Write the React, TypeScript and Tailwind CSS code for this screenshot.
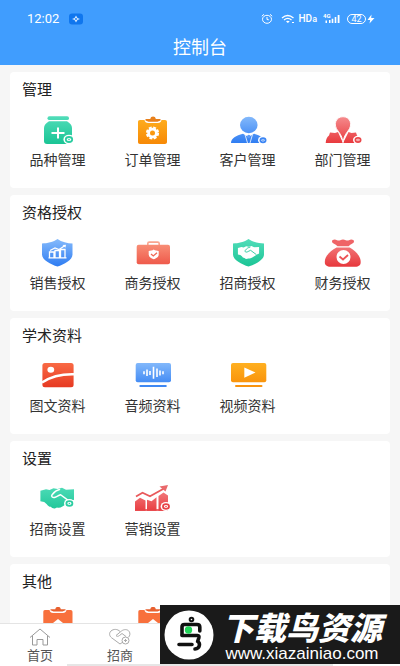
import type { ReactNode } from 'react';

type Tone = 'green' | 'orange' | 'blue' | 'red' | 'coral' | 'rust';

const tones: Record<Tone, [string, string]> = {
  green: ['#4fdcb8', '#1cc596'],
  orange: ['#ffb020', '#f78a06'],
  blue: ['#82b8fb', '#2f7df2'],
  red: ['#f58a8c', '#e83a3e'],
  coral: ['#fa9a80', '#ee5547'],
  rust: ['#f96a45', '#e5361f'],
};

function Glyph({
  id,
  tone,
  children,
}: {
  id: string;
  tone: Tone;
  children: (fill: string) => ReactNode;
}) {
  const [from, to] = tones[tone];
  return (
    <svg viewBox="0 0 40 32" className="h-8 w-10" aria-hidden="true">
      <defs>
        <linearGradient
          id={id}
          gradientUnits="userSpaceOnUse"
          x1="0"
          y1="2"
          x2="0"
          y2="28"
        >
          <stop offset="0" stopColor={from} />
          <stop offset="1" stopColor={to} />
        </linearGradient>
      </defs>
      {children(`url(#${id})`)}
    </svg>
  );
}

// small settings cog sitting on the lower right of an icon
function Cog({ x, y, fill, r = 3 }: { x: number; y: number; fill: string; r?: number }) {
  return (
    <g>
      <ellipse cx={x} cy={y} rx={r + 2.4} ry={r + 1.6} fill="#fff" />
      <ellipse cx={x} cy={y} rx={r} ry={r * 0.78} fill="none" stroke={fill} strokeWidth="1.8" />
      <circle cx={x} cy={y} r="0.8" fill={fill} />
    </g>
  );
}

function Gear({ x, y }: { x: number; y: number }) {
  return (
    <g>
      <circle cx={x} cy={y} r="3.9" fill="none" stroke="#fff" strokeWidth="2.8" />
      <circle
        cx={x}
        cy={y}
        r="5.6"
        fill="none"
        stroke="#fff"
        strokeWidth="2"
        strokeDasharray="2.9 1.5"
      />
    </g>
  );
}

function HandshakeShape({ fill, line }: { fill: string; line: string }) {
  return (
    <g>
      <path
        d="M2.4 6.8 8 5.2l3.5.8 4-1.7 4 .7 4.5-1.2 4 2 8-.6v10.6l-3.4 1.6-8.2 5.2c-2 1.2-3.6 1.6-5.4.9l-1.6.7c-1.8.6-3.3-.2-4.6-1.4-1.8-.1-3-1-4-2.6L6.2 18l-3.8-.8z"
        fill={fill}
      />
      <path
        d="M21.5 5.6c-3 .6-5 2.2-7.4 5.1-1.4 1.9.7 3.4 3 2.6 2-.7 3.4-2.1 5.5-2.6l8.6 6.4"
        fill="none"
        stroke={line}
        strokeWidth="1.5"
        strokeLinecap="round"
      />
    </g>
  );
}

const varietyIcon = (
  <Glyph id="variety" tone="green">
    {(fill) => (
      <>
        <rect x="9.5" y="1.3" width="21.5" height="3.8" rx="1.9" fill={fill} />
        <path
          d="M11 6.2h18c3 2 5 3.8 5 6.8v13c0 2-1 3-3 3H9c-2 0-3-1-3-3V13c0-3 2-4.8 5-6.8z"
          fill={fill}
        />
        <path d="M20 12.5v11M13.5 18h13" stroke="#fff" strokeWidth="2" />
        <Cog x={31} y={24.5} fill="#2ccda1" r={3.2} />
      </>
    )}
  </Glyph>
);

const orderIcon = (
  <Glyph id="order" tone="orange">
    {(fill) => (
      <>
        <path
          d="M7 5h4.5c.6 2.2 1.5 3 3.5 3h10c2 0 2.9-.8 3.5-3H32c1.4 0 2 .8 2 2v20c0 1.3-.8 2-2 2H7c-1.3 0-2-.7-2-2V7c0-1.2.7-2 2-2z"
          fill={fill}
        />
        <path d="M12.5 4h4.8c.3-3.3 5.2-3.3 5.5 0h4.7v1.5l-3 1.3h-9l-3-1.3z" fill="#e8801c" />
        <Gear x={19.5} y={18} />
      </>
    )}
  </Glyph>
);

const customerIcon = (
  <Glyph id="customer" tone="blue">
    {(fill) => (
      <>
        <ellipse cx="20.8" cy="10" rx="8.8" ry="8.2" fill={fill} />
        <path
          d="M3 28c.2-4.5 5-7.5 12-9.2L20.5 22 26 18.8C32.5 20.5 37 23.5 37.5 28z"
          fill={fill}
        />
        <path d="m17 19.5 2.5 8.5M24.5 19.5 22 28" stroke="#fff" strokeWidth=".8" />
        <circle cx="20.8" cy="21.5" r="1.7" fill="#5b9bf7" />
        <Cog x={35} y={25.3} fill="#3c86f4" r={2.6} />
      </>
    )}
  </Glyph>
);

const departmentIcon = (
  <Glyph id="department" tone="red">
    {(fill) => (
      <>
        <path
          d="M2.7 28c.2-3.5 1.3-6 3.3-7.5l1-3 5 .5 3-1L20 28l5.5-11 3 1 4.5-.5 1 3c2 1.5 3 4 3 7.5z"
          fill={fill}
        />
        <path
          d="M20 27.5c-.8-6-2.6-8.3-4.8-11.3C9.5 9.5 13 1.7 20 1.7s10.5 7.8 4.8 14.5c-2.2 3-4 5.3-4.8 11.3z"
          fill={fill}
          stroke="#fff"
          strokeWidth=".9"
        />
        <Cog x={35} y={25} fill="#ea4649" r={2.6} />
      </>
    )}
  </Glyph>
);

const salesIcon = (
  <Glyph id="sales" tone="blue">
    {(fill) => (
      <>
        <path
          d="M19.5 1c4 3 10 4.3 15 4.5v11C34.5 22 26 26.5 19.5 28.5 13 26.5 4 22 4 16.5v-11C9 5.3 15.5 4 19.5 1z"
          fill={fill}
        />
        <path
          d="M11.5 19.5V14H16v5.5M17 19.5v-7h4.5v7M22.5 19.5v-8H27v8M10.5 19.8h18"
          fill="none"
          stroke="#fff"
          strokeWidth="1.3"
        />
        <path d="m12 12.5 5-2.5 4 1.5 6-4" fill="none" stroke="#fff" strokeWidth="1.2" />
        <path d="m24.5 7 3.5-.2-.6 3z" fill="#fff" />
      </>
    )}
  </Glyph>
);

const businessIcon = (
  <Glyph id="business" tone="coral">
    {(fill) => (
      <>
        <path
          d="M14.8 7V5.5c0-1 .6-1.4 1.5-1.4h8.4c.9 0 1.5.4 1.5 1.4V7"
          fill="none"
          stroke="#f9a58f"
          strokeWidth="1.6"
        />
        <rect x="3.7" y="6.7" width="33.3" height="19.5" rx="2" fill={fill} />
        <path
          d="M20.7 11.5c1.5 1 3.2 1.4 5 1.5v3.5c0 2.5-2.6 3.9-5 4.8-2.4-.9-5-2.3-5-4.8V13c1.8-.1 3.5-.5 5-1.5z"
          fill="#fff"
        />
        <path d="m18 16 2.3 2 3.7-3.3" fill="none" stroke="#f06a57" strokeWidth="1.3" />
      </>
    )}
  </Glyph>
);

const investIcon = (
  <Glyph id="invest" tone="green">
    {(fill) => (
      <>
        <path
          d="M20.5 1c4 3 10.5 4.3 15.5 4.5v11c0 5.5-9 10-15.5 12-6.5-2-15.5-6.5-15.5-12v-11C10 5.3 16.5 4 20.5 1z"
          fill={fill}
        />
        <g transform="translate(8.4 5.6) scale(.63)">
          <HandshakeShape fill="#fff" line="#2dcb9f" />
        </g>
      </>
    )}
  </Glyph>
);

const financeIcon = (
  <Glyph id="finance" tone="red">
    {(fill) => (
      <>
        <path
          d="M9 3.5c0-1.8 2.8-2.5 5-1.3 1.2.6 2.3.5 3.3 0 1.7-1 3.7-1 5.4 0 1 .5 2.2.6 3.3 0 2.2-1.2 5-.5 5 1.3 0 2-3.5 2.6-5.3 4.7H14.5C12.6 6.1 9 5.5 9 3.5z"
          fill="#ef6467"
        />
        <path
          d="M13.5 9.5h13.2C32.5 13 37.7 18 37.7 24c0 3.3-2 4.7-5.5 4.7H7.4C4 28.7 1.8 27.3 1.8 24c0-6 5.5-11 11.7-14.5z"
          fill={fill}
        />
        <circle cx="20.5" cy="19" r="7" fill="#fff" />
        <path d="m16.5 18.5 3.5 3 5-4.5" fill="none" stroke="#ec5356" strokeWidth="1.8" />
      </>
    )}
  </Glyph>
);

const imageIcon = (
  <Glyph id="image" tone="rust">
    {(fill) => (
      <>
        <rect x="4.4" y="2" width="31.2" height="24.3" rx="2.5" fill={fill} />
        <ellipse cx="12.8" cy="8.8" rx="3.4" ry="3" fill="#fff" />
        <path d="M4 21.5C13 15.5 24 13 36 13.3" fill="none" stroke="#fff" strokeWidth="2.4" />
      </>
    )}
  </Glyph>
);

const audioIcon = (
  <Glyph id="audio" tone="blue">
    {(fill) => (
      <>
        <rect x="2.7" y="2" width="35.3" height="19.3" rx="2" fill={fill} />
        <path
          d="M11 10.3v3M14 8.5v6.5M17 10v4M20.5 5.8v12M24 7.5v8.5M27 9.5v5M30 10.3v3"
          stroke="#fff"
          strokeWidth="1.6"
        />
        <rect x="6.3" y="24" width="27.5" height="2" rx="1" fill="#3f88f3" />
      </>
    )}
  </Glyph>
);

const videoIcon = (
  <Glyph id="video" tone="orange">
    {(fill) => (
      <>
        <rect x="3" y="2" width="35.3" height="19.3" rx="2" fill={fill} />
        <path d="M16.3 6.5v10.2L27.5 11.6z" fill="#fff" />
        <rect x="7" y="24" width="27.5" height="2" rx="1" fill="#f9930e" />
      </>
    )}
  </Glyph>
);

const investSetupIcon = (
  <Glyph id="invest-setup" tone="green">
    {(fill) => (
      <>
        <HandshakeShape fill={fill} line="#fff" />
        <Cog x={31.4} y={19.5} fill="#2ccda1" />
      </>
    )}
  </Glyph>
);

const marketingIcon = (
  <Glyph id="marketing" tone="red">
    {(fill) => (
      <>
        <path
          d="M2 26.8V17.5l5-3.7 5.5 2.7V26.8zM14 26.8V15.8l4.5 1.5 5-4V26.8zM25.5 26.8V12l5-3.5 4.5 3V26.8z"
          fill={fill}
        />
        <path d="M2 26h30" stroke="#e84347" strokeWidth="1.6" />
        <path d="m3 12.5 6.5-3.7 7.5 3.5L31 4.5" fill="none" stroke="#e9595b" strokeWidth="1.8" />
        <path d="m26.5 2.5 8.5-1.5-2.5 6.5z" fill="#e9696b" />
        <Cog x={33} y={22.5} fill="#e84347" />
      </>
    )}
  </Glyph>
);

const clipboardIcon = (
  <svg viewBox="0 0 40 32" className="h-8 w-10" aria-hidden="true">
    <path
      d="M7 3h4.5c.6 2.2 1.5 3 3.5 3h10c2 0 2.9-.8 3.5-3h4c1.3 0 2 .8 2 2v20c0 1.3-.8 2-2 2H7.3c-1.3 0-2-.7-2-2V5c0-1.2.5-2 1.7-2z"
      fill="#f8703c"
    />
    <path d="M12.5 2.3h4.8c.3-3.3 5.2-3.3 5.5 0h4.7v1l-3 1.3h-9l-3-1.3z" fill="#e8602f" />
    <path d="m20 12 5 4v6H15v-6z" fill="#fff" />
  </svg>
);

type Item = { label?: string; icon: ReactNode };

const sections: { title: string; items: Item[] }[] = [
  {
    title: '管理',
    items: [
      { label: '品种管理', icon: varietyIcon },
      { label: '订单管理', icon: orderIcon },
      { label: '客户管理', icon: customerIcon },
      { label: '部门管理', icon: departmentIcon },
    ],
  },
  {
    title: '资格授权',
    items: [
      { label: '销售授权', icon: salesIcon },
      { label: '商务授权', icon: businessIcon },
      { label: '招商授权', icon: investIcon },
      { label: '财务授权', icon: financeIcon },
    ],
  },
  {
    title: '学术资料',
    items: [
      { label: '图文资料', icon: imageIcon },
      { label: '音频资料', icon: audioIcon },
      { label: '视频资料', icon: videoIcon },
    ],
  },
  {
    title: '设置',
    items: [
      { label: '招商设置', icon: investSetupIcon },
      { label: '营销设置', icon: marketingIcon },
    ],
  },
  {
    title: '其他',
    items: [{ icon: clipboardIcon }, { icon: clipboardIcon }],
  },
];

function StatusBar() {
  return (
    <div className="flex h-[14px] items-center justify-between pr-[25px] pl-[27px]">
      <div className="flex items-center gap-2.5">
        <span className="font-[Roboto,sans-serif] text-[13px] leading-[14px]">12:02</span>
        <svg viewBox="0 0 14 12" className="h-3 w-3.5" aria-hidden="true">
          <rect y="0.5" width="14" height="11" rx="3" fill="#0f76ee" />
          <path d="M7 2.5 8.5 5 11 6 8.5 7 7 9.5 5.5 7 3 6l2.5-1z" fill="#cfe6ff" />
          <circle cx="7" cy="6" r=".9" fill="#0f76ee" />
        </svg>
      </div>
      <div className="flex items-center">
        <svg viewBox="0 0 12 12" className="mr-2 h-3 w-3" fill="none" stroke="#fff" aria-hidden="true">
          <ellipse cx="6" cy="6.3" rx="4.5" ry="4" />
          <path d="M6 4v2.5l1.8.3M.8 3.2 3 1.3M11.2 3.2 9 1.3" />
        </svg>
        <svg viewBox="0 0 14 12" className="mr-1 h-3 w-3.5" fill="none" stroke="#fff" aria-hidden="true">
          <path d="M1 5c3.5-3 8-3 11.5 0M3 7c2.4-2 5.2-2 7.5 0" strokeWidth="1.3" />
          <path d="M5 8.5c1.2-.9 2.5-.9 3.7 0L6.8 10z" fill="#fff" stroke="none" />
          <path d="M11 9.5h2" />
        </svg>
        <span className="mr-1.5 font-[Roboto,sans-serif] text-[10px] leading-[14px] font-medium">
          HD<span className="text-[9px]">a</span>
        </span>
        <svg viewBox="0 0 18 12" className="mr-1.5 h-3 w-[18px]" fill="#fff" aria-hidden="true">
          <text x="0" y="5" fontSize="6" fontFamily="Roboto, sans-serif" fontWeight="700">
            4G
          </text>
          <path d="M2.5 7.5H4V10H2.5zM6 7h1.5v3H6zM8.7 5.8h1.6V10H8.7zM11.7 4h1.6v6h-1.6zM14.7 2h1.8v8h-1.8z" />
        </svg>
        <span className="flex h-2.5 w-[19px] items-center justify-center rounded-full border border-white font-[Roboto,sans-serif] text-[9px] leading-none">
          42
        </span>
        <svg viewBox="0 0 9 10" className="h-2.5 w-[9px]" fill="#fff" aria-hidden="true">
          <path d="M5.5.5 1.5 6h2.7L3.5 9.5 8.5 4H5.2z" />
        </svg>
      </div>
    </div>
  );
}

function Section({ title, items }: { title: string; items: Item[] }) {
  return (
    <section className="shrink-0 rounded bg-white pt-[7px] pb-[19px]">
      <h2 className="pl-3 text-[15px] leading-5 text-[#222]">{title}</h2>
      <div className="mt-4 grid grid-cols-4">
        {items.map(({ label, icon }, index) => (
          <button key={label ?? index} type="button" className="flex flex-col items-center">
            {icon}
            {label && <span className="mt-0.5 text-sm leading-5 text-[#333]">{label}</span>}
          </button>
        ))}
      </div>
    </section>
  );
}

function TabBar() {
  return (
    <nav className="shrink-0 border-t border-[#e4e4e4] bg-white">
      <div className="grid grid-cols-5 text-[13px] leading-[18px] text-[#555]">
        <a href="#home" className="flex flex-col items-center pt-1">
          <svg viewBox="0 0 24 18" className="h-[18px] w-6" fill="none" stroke="#999" aria-hidden="true">
            <path d="M2 9.5 12 1l10 8.5M4.5 8v9H9v-5.5h6V17h4.5V8" />
          </svg>
          首页
        </a>
        <a href="#invest" className="flex flex-col items-center pt-1">
          <svg viewBox="0 0 24 18" className="h-[18px] w-6" fill="none" stroke="#aaa" aria-hidden="true">
            <path d="M12 3.5C9.5.8 5.5.8 3 3c-2.3 2.3-1.5 5 .5 6.7L12 16l3-2" />
            <path d="M8 7.5 13.5 3C16 1 19.5 1.2 21 3.3c1.5 2 1 4.2-.5 6M8 7.5c.8 1.2 2.3 1 3.5 0L14 5.5l4 3" />
            <circle cx="17.5" cy="12.5" r="3.5" />
            <path d="M16 12.5h3M17.5 11v3" />
          </svg>
          招商
        </a>
      </div>
      <div className="mx-[67px] h-0.5 bg-[#e6e6e6]" />
    </nav>
  );
}

function Banner() {
  return (
    <aside className="absolute right-0 bottom-0.5 flex h-[59px] w-60 items-center bg-[#1a1a1a] pl-1 text-white">
      <svg viewBox="0 0 50 50" className="size-[50px] shrink-0" aria-hidden="true">
        <circle cx="25" cy="25" r="24.5" fill="#fff" />
        <g fill="none" stroke="#111" strokeWidth="3.6" strokeLinecap="round" strokeLinejoin="round">
          <circle cx="27.5" cy="9.5" r="1.8" strokeWidth="2" />
          <path d="M18 24.5V17c0-1.5.7-2.5 2.5-2.5H33c2 0 2.8 1 2.8 2.5v4" />
          <path d="M18 25.5h15.5c1.5 0 1.7 1 1.3 2.5l-1.2 3.5c3 1.5 2.5 7-2.6 7.5M15 34.5h13" />
        </g>
        <circle cx="24.5" cy="20" r="3.7" fill="#22d65a" />
      </svg>
      <div className="flex flex-1 flex-col items-center gap-1.5 pt-1.5 pr-2.5">
        <strong className="text-[32px] leading-[26px] font-black whitespace-nowrap italic">
          下载鸟资源
        </strong>
        <span className="font-['Liberation_Sans',Arial,sans-serif] text-[17px] leading-[18px]">
          www.xiazainiao.com
        </span>
      </div>
    </aside>
  );
}

export default function App() {
  return (
    <div className="relative flex h-screen flex-col overflow-hidden bg-[#f6f6f6] font-['Noto_Sans_CJK_SC',sans-serif]">
      <header className="shrink-0 bg-[#409dfe] pt-3 pb-[5px] text-white">
        <StatusBar />
        <h1 className="mt-1.5 text-center text-lg leading-7">控制台</h1>
      </header>
      <main className="flex min-h-0 flex-1 flex-col gap-[7px] overflow-hidden px-2.5 pt-[7px]">
        {sections.map((section) => (
          <Section key={section.title} {...section} />
        ))}
      </main>
      <TabBar />
      <Banner />
    </div>
  );
}
